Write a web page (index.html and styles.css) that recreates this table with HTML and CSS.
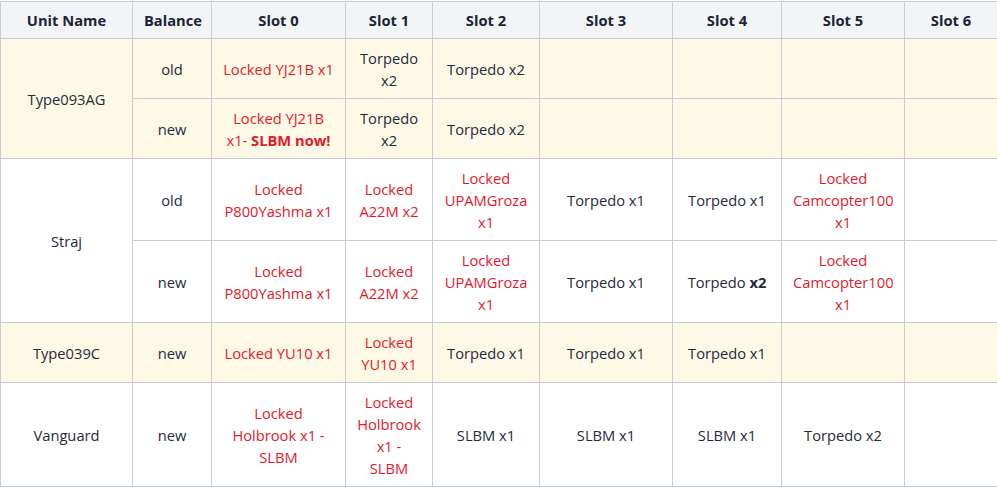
FILE: index.html
```html
<!DOCTYPE html>
<html>
<head>
<meta charset="utf-8">
<link rel="stylesheet" href="styles.css">
</head>
<body>
<div class="scroller">
<table class="grid">
  <colgroup>
    <col class="c-name"><col class="c-bal"><col class="c-s0"><col class="c-s1"><col class="c-s2"><col class="c-s3"><col class="c-s4"><col class="c-s5"><col class="c-s6">
  </colgroup>
  <thead>
    <tr>
      <th>Unit Name</th><th>Balance</th><th>Slot 0</th><th>Slot 1</th><th>Slot 2</th><th>Slot 3</th><th>Slot 4</th><th>Slot 5</th><th>Slot 6</th>
    </tr>
  </thead>
  <tbody>
    <tr class="hl">
      <td rowspan="2">Type093AG</td>
      <td>old</td>
      <td class="lock">Locked YJ21B x1</td>
      <td>Torpedo x2</td>
      <td>Torpedo x2</td>
      <td></td><td></td><td></td><td></td>
    </tr>
    <tr class="hl">
      <td>new</td>
      <td class="lock">Locked YJ21B x1- <b>SLBM now!</b></td>
      <td>Torpedo x2</td>
      <td>Torpedo x2</td>
      <td></td><td></td><td></td><td></td>
    </tr>
    <tr>
      <td rowspan="2">Straj</td>
      <td>old</td>
      <td class="lock">Locked P800Yashma x1</td>
      <td class="lock">Locked A22M x2</td>
      <td class="lock">Locked UPAMGroza x1</td>
      <td>Torpedo x1</td>
      <td>Torpedo x1</td>
      <td class="lock">Locked Camcopter100 x1</td>
      <td></td>
    </tr>
    <tr>
      <td>new</td>
      <td class="lock">Locked P800Yashma x1</td>
      <td class="lock">Locked A22M x2</td>
      <td class="lock">Locked UPAMGroza x1</td>
      <td>Torpedo x1</td>
      <td>Torpedo <b>x2</b></td>
      <td class="lock">Locked Camcopter100 x1</td>
      <td></td>
    </tr>
    <tr class="hl">
      <td>Type039C</td>
      <td>new</td>
      <td class="lock">Locked YU10 x1</td>
      <td class="lock">Locked YU10 x1</td>
      <td>Torpedo x1</td>
      <td>Torpedo x1</td>
      <td>Torpedo x1</td>
      <td></td><td></td>
    </tr>
    <tr>
      <td>Vanguard</td>
      <td>new</td>
      <td class="lock">Locked Holbrook x1 - SLBM</td>
      <td class="lock">Locked Holbrook x1 - SLBM</td>
      <td>SLBM x1</td>
      <td>SLBM x1</td>
      <td>SLBM x1</td>
      <td>Torpedo x2</td>
      <td></td>
    </tr>
  </tbody>
</table>
</div>
</body>
</html>
```

FILE: styles.css
```css
html, body {
  margin: 0;
  padding: 0;
  background: #ffffff;
}

.scroller {
  padding-top: 1px;
}

.grid {
  width: 997px;
  table-layout: fixed;
  border-collapse: collapse;
  font-family: "Open Sans", "Noto Sans", sans-serif;
  font-size: 14.7px;
  line-height: 22px;
  color: #1f2a3c;
}

.c-name { width: 132px; }
.c-bal { width: 79px; }
.c-s0 { width: 134px; }
.c-s1 { width: 87px; }
.c-s2 { width: 107px; }
.c-s3 { width: 133px; }
.c-s4 { width: 109px; }
.c-s5 { width: 123px; }
.c-s6 { width: 93px; }

.grid th,
.grid td {
  border: 1px solid #c7cbd2;
  padding: 7.5px 11px;
  text-align: center;
  vertical-align: middle;
}

.grid th {
  background: #f3f4f6;
  font-weight: 700;
  color: #1a2436;
  height: 22px;
  padding-top: 7px;
  padding-bottom: 7px;
}

.grid tr.hl td {
  background: #fef9e7;
}

.grid td.lock {
  color: #e3192b;
}

.grid td b {
  font-weight: 700;
}
```
